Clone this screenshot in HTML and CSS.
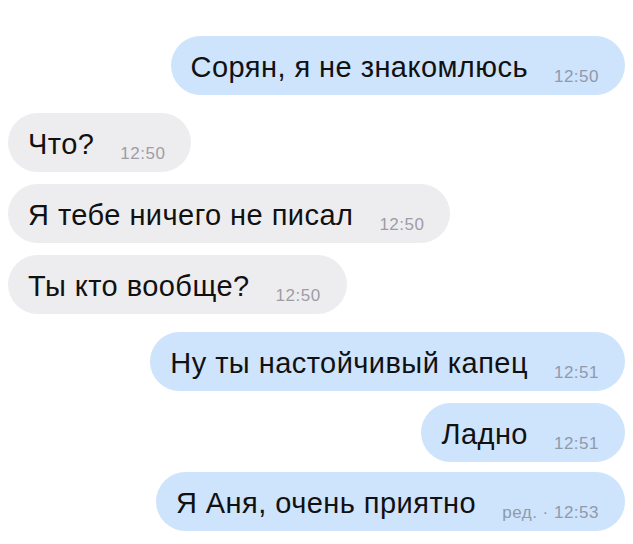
FILE: index.html
```html
<!DOCTYPE html>
<html lang="ru">
<head>
    <meta charset="UTF-8">
    <meta name="viewport" content="width=device-width, initial-scale=1.0">
    <title>Чат</title>
    <link rel="stylesheet" href="styles.css">
</head>
<body>

    <div class="chat">
        <div class="bubble out">Сорян, я не знакомлюсь<span class="time">12:50</span></div>

        <div class="bubble in first">Что?<span class="time">12:50</span></div>
        <div class="bubble in">Я тебе ничего не писал<span class="time">12:50</span></div>
        <div class="bubble in">Ты кто вообще?<span class="time">12:50</span></div>

        <div class="bubble out first">Ну ты настойчивый капец<span class="time">12:51</span></div>
        <div class="bubble out">Ладно<span class="time">12:51</span></div>
        <div class="bubble out last">Я Аня, очень приятно<span class="time">ред. · 12:53</span></div>
    </div>

</body>
</html>
```

FILE: styles.css
```css
body {
    margin: 0;
    padding: 8px;
    background: #fff;
    font-family: "Liberation Sans", Arial, sans-serif;
    color: #111;
}
.chat {
    display: flex;
    flex-direction: column;
    padding-top: 28px;
}
.bubble {
    height: 59px;
    line-height: 58px;
    padding: 2px 26px 0 20px;
    box-sizing: border-box;
    border-radius: 30px;
    font-size: 29px;
    letter-spacing: 0.45px;
    white-space: nowrap;
    margin-top: 12px;
}
.bubble.first {
    margin-top: 18px;
}
.bubble.last {
    margin-top: 10px;
}
.chat .bubble:first-child {
    margin-top: 0;
}
.out {
    align-self: flex-end;
    background: #cee3fc;
}
.in {
    align-self: flex-start;
    background: #ededf0;
}
.time {
    font-size: 17px;
    letter-spacing: 0.5px;
    line-height: 1;
    margin-left: 26px;
    vertical-align: -5px;
    color: #8f9aab;
}
.in .time {
    color: #9d9da3;
}
```
